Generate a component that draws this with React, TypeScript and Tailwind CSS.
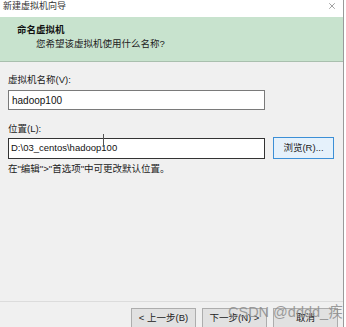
import { X } from "lucide-react";

const font = { fontFamily: '"Liberation Sans", "Noto Sans CJK SC", sans-serif' };

function Btn({ label }: { label: string }) {
  return (
    <div className="w-[65px] h-[21px] flex items-center justify-center border border-[#adadad] bg-[#e1e1e1] text-[9.5px] text-[#222]">
      {label}
    </div>
  );
}

export default function App() {
  return (
    <div className="relative w-[346px] h-[327px] overflow-hidden bg-white" style={font}>
      <div className="w-[344px] h-full border-r border-[#9a9a9a] bg-[#f0f0f0] flex flex-col">
        {/* title bar */}
        <div className="h-[17px] bg-white flex items-start justify-between pl-[3px] pr-[6px] pt-[1px]">
          <span className="text-[9px] leading-[10px] text-[#333]">新建虚拟机向导</span>
          <X className="w-[10px] h-[10px] text-[#444]" strokeWidth={1.2} />
        </div>

        {/* header */}
        <div className="h-[45px] bg-[#c8e3ce] border-b border-[#a9bfae] pl-[17px] pt-[6px]">
          <div className="text-[9.5px] font-bold leading-[14px] text-[#111]">命名虚拟机</div>
          <div className="pl-[19px] text-[9.5px] leading-[14px] text-[#222]">
            您希望该虚拟机使用什么名称?
          </div>
        </div>

        {/* body */}
        <div className="flex-1 flex flex-col px-[8px] pt-[11px] text-[9.5px] text-[#222]">
          <div className="leading-[13px]">虚拟机名称(V):</div>
          <div className="mt-[4px] w-[257px] h-[20px] bg-white border border-[#7a7a7a] flex items-center px-[3px] text-[10px] text-[#111]">
            hadoop100
          </div>

          <div className="mt-[12px] leading-[13px]">位置(L):</div>
          <div className="mt-[2px] flex items-center gap-[8px]">
            <div className="relative w-[257px] h-[21px] bg-white border border-[#333] flex items-center px-[2px] text-[9.5px] text-[#111]">
              D:\03_centos\hadoop100
              <span className="absolute left-[94px] top-[-5px] w-[1px] h-[13px] bg-[#555]" />
            </div>
            <div className="w-[61px] h-[22px] border border-[#3c8fd6] bg-[#e5f1fb] flex items-center justify-center text-[9.5px] text-[#222]">
              浏览(R)...
            </div>
          </div>
          <div className="mt-[3px] leading-[13px]">在"编辑"&gt;"首选项"中可更改默认位置。</div>

          <div className="flex-1" />
          <div className="border-t border-[#dcdcdc] -mx-[8px] pt-[6px] flex justify-end gap-[6px] pr-[5px] h-[26px]">
            <Btn label="< 上一步(B)" />
            <Btn label="下一步(N) >" />
            <Btn label="取消" />
          </div>
        </div>
      </div>

      {/* watermark */}
      <div className="absolute left-[228px] top-[305px] whitespace-nowrap text-[14.5px] leading-none text-[#8c8c8c]/85">
        CSDN @dddd_疾
      </div>
    </div>
  );
}
